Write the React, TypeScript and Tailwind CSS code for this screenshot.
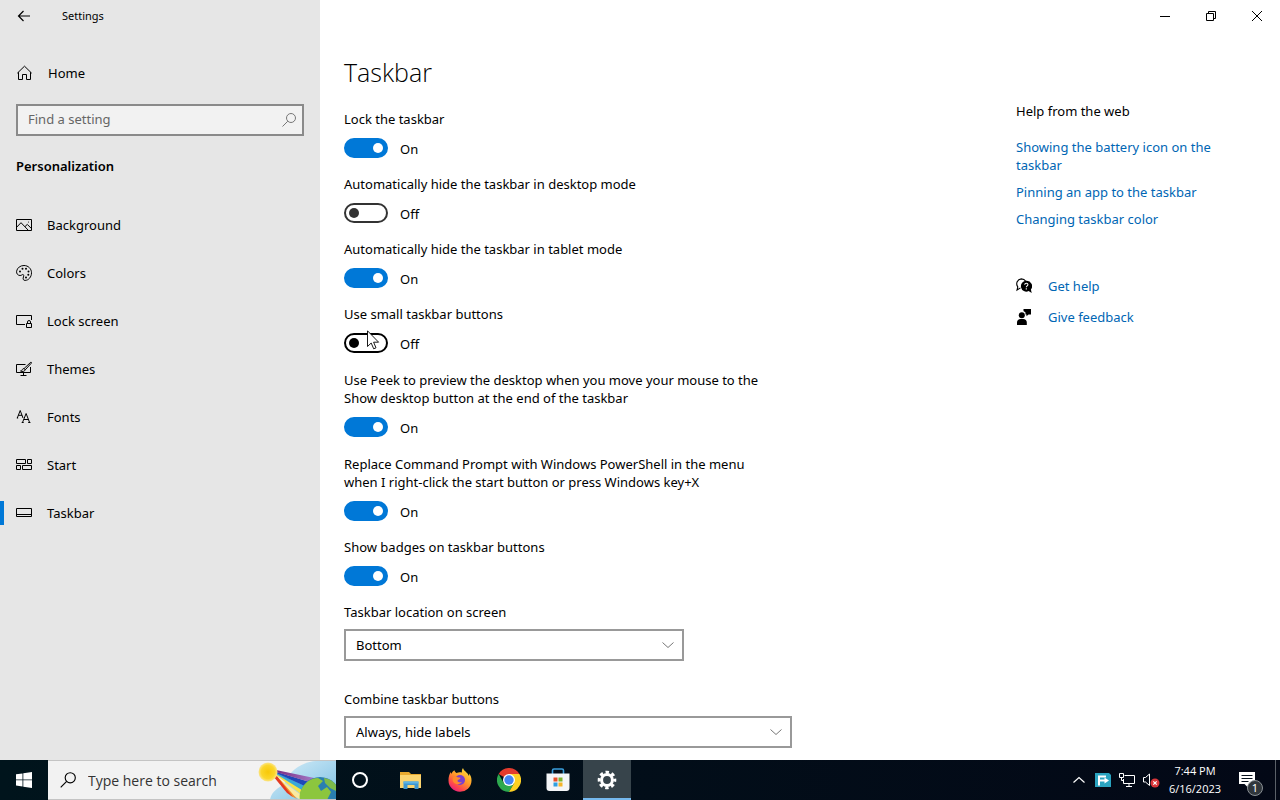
import React, { useState } from 'react';

interface ToggleSetting {
  id: string;
  label: string;
  on: boolean;
  tall?: boolean;
  hovered?: boolean;
}

interface SelectSetting {
  id: string;
  label: string;
  width: string;
  options: string[];
}

const TOGGLES: ToggleSetting[] = [
  { id: 'lock', label: 'Lock the taskbar', on: true },
  { id: 'hide-desktop', label: 'Automatically hide the taskbar in desktop mode', on: false },
  { id: 'hide-tablet', label: 'Automatically hide the taskbar in tablet mode', on: true },
  { id: 'small', label: 'Use small taskbar buttons', on: false, hovered: true },
  { id: 'peek', label: 'Use Peek to preview the desktop when you move your mouse to the Show desktop button at the end of the taskbar', on: true, tall: true },
  { id: 'powershell', label: 'Replace Command Prompt with Windows PowerShell in the menu when I right-click the start button or press Windows key+X', on: true, tall: true },
  { id: 'badges', label: 'Show badges on taskbar buttons', on: true },
];

const SELECTS: SelectSetting[] = [
  { id: 'location', label: 'Taskbar location on screen', width: 'w-[340px]', options: ['Bottom', 'Left', 'Top', 'Right'] },
  { id: 'combine', label: 'Combine taskbar buttons', width: 'w-[448px]', options: ['Always, hide labels', 'When taskbar is full', 'Never'] },
];

const Line = ({ children, className = 'size-4' }: { children: React.ReactNode; className?: string }) => (
  <svg viewBox="0 0 16 16" className={className} fill="none" stroke="currentColor" aria-hidden="true">
    {children}
  </svg>
);

const HomeIcon = () => (
  <Line>
    <path d="M1.3 8.2 8.5 1.2l7.2 7M2.5 7.2v7.3h4V9.5h4v5h4V7.2" />
  </Line>
);

const BackgroundIcon = () => (
  <Line>
    <path d="M.5 2.5h15v11H.5zM.7 10.2l4.3-4.5 7.3 7.6M9 9.6l2.3-2.2 4.2 4.2" />
    <circle cx="12.5" cy="5" r=".5" fill="currentColor" stroke="none" />
  </Line>
);

const ColorsIcon = () => (
  <Line>
    <path d="M.6 6.2C1.2 2.8 4.3.5 8 .5c4.2 0 7.5 3.2 7.5 7.3 0 4.3-3 7.6-6.4 7.6-1.7 0-2.2-1.2-1.9-2.4.3-1.5.9-2.6.2-3.3-.8-.8-1.5.8-3.3.8C2 10.5.2 8.7.6 6.2z" />
    <g fill="currentColor" stroke="none">
      <circle cx="4" cy="6.5" r="1" />
      <circle cx="6.5" cy="3.8" r="1" />
      <circle cx="10" cy="3.8" r="1" />
      <circle cx="12.5" cy="6.5" r="1" />
      <circle cx="12.3" cy="9.8" r="1" />
      <circle cx="10" cy="12.5" r="1" />
    </g>
  </Line>
);

const LockScreenIcon = () => (
  <Line>
    <path d="M9 11.5H.5v-9h15V7M10.5 10.5h5v4h-5zM11.5 10.5V9a1.5 1.5 0 0 1 3 0v1.5" />
  </Line>
);

const ThemesIcon = () => (
  <Line>
    <path d="M9.5 3.5h-9v8h14V6M7.5 11.5v3M4.5 14.5h6" />
    <path d="M14.8 1.2 8.2 7.4l1.2 1.3 5.9-6.5c.5-.7-.1-1.3-.5-1zM8 7.6c-1.5 0-1.7 1-2 1.7-.2.5-.8.7-1.5.7 1.5.9 4.5.6 4.7-1.2z" />
  </Line>
);

const FontsIcon = () => (
  <Line>
    <path d="m1.3 9 2.9-7.5L7 9M2.3 6.3h3.8M.8 9h1.4" />
    <path d="m6.5 13.5 3.6-9 3.5 9M7.8 10.5h4.6M5.7 13.5h2M12.2 13.5h2.2" />
  </Line>
);

const StartIcon = () => (
  <Line>
    <path d="M.5 2.5h9v4h-9zM11.5 2.5h4v4h-4zM.5 8.5h4v4h-4zM6.5 8.5h9v4h-9z" />
  </Line>
);

const TaskbarIcon = () => (
  <Line>
    <path d="M.5 3.5h15v8H.5zM.5 9.5h15" />
  </Line>
);

const SearchIcon = ({ className }: { className: string }) => (
  <Line className={className}>
    <circle cx="10" cy="6" r="4.5" />
    <path d="M6.8 9.2 1.5 14.5" />
  </Line>
);

const NAV = [
  { label: 'Background', icon: BackgroundIcon },
  { label: 'Colors', icon: ColorsIcon },
  { label: 'Lock screen', icon: LockScreenIcon },
  { label: 'Themes', icon: ThemesIcon },
  { label: 'Fonts', icon: FontsIcon },
  { label: 'Start', icon: StartIcon },
  { label: 'Taskbar', icon: TaskbarIcon },
];

const Cursor = () => (
  <svg viewBox="0 0 13 20" className="absolute left-[23px] -top-[3px] h-5 w-[13px] pointer-events-none" aria-hidden="true">
    <path d="M.5.8v15.7l3.7-3.5 2.5 5.8 2.3-1-2.4-5.6h5z" fill="#fff" stroke="#000" strokeWidth=".9" />
  </svg>
);

const ToggleRow = ({ setting }: { setting: ToggleSetting }) => {
  const [on, setOn] = useState(setting.on);
  const offColor = setting.hovered ? 'border-black before:bg-black' : 'border-[#333] before:bg-[#333]';

  return (
    <div className={setting.tall ? 'pt-px' : ''}>
      <label htmlFor={setting.id} className="block max-w-[432px]">{setting.label}</label>
      <div className="relative mt-2.5 flex h-5 items-center gap-3">
        <input
          id={setting.id}
          type="checkbox"
          role="switch"
          checked={on}
          onChange={(e) => setOn(e.target.checked)}
          className={`flex h-5 w-11 shrink-0 appearance-none items-center rounded-full border-2 px-[3px] before:size-2.5 before:rounded-full ${
            on ? 'justify-end border-[#0078d7] bg-[#0078d7] before:bg-white' : `justify-start bg-white ${offColor}`
          }`}
        />
        <span className="pt-0.5">{on ? 'On' : 'Off'}</span>
        {setting.hovered && <Cursor />}
      </div>
    </div>
  );
};

const SelectRow = ({ setting }: { setting: SelectSetting }) => (
  <div>
    <label htmlFor={setting.id} className="block">{setting.label}</label>
    <div className={`relative mt-2 max-w-full ${setting.width}`}>
      <select id={setting.id} className="block h-8 w-full appearance-none border-2 border-[#999] bg-white px-2.5">
        {setting.options.map((o) => <option key={o}>{o}</option>)}
      </select>
      <Line className="pointer-events-none absolute right-2 top-2 size-4 text-[#777]">
        <path d="m2.5 5.5 5.5 5 5.5-5" />
      </Line>
    </div>
  </div>
);

const Sidebar = () => (
  <aside className="w-80 shrink-0 bg-[#e6e6e6]">
    <div className="flex h-8 items-center">
      <button type="button" aria-label="Back" className="flex h-8 w-12 items-center justify-center">
        <Line>
          <path d="M14 8H2.5M7.5 3l-5 5 5 5" strokeWidth="1.2" />
        </Line>
      </button>
      <span className="ml-3.5 text-[11px]">Settings</span>
    </div>
    <a href="#home" className="mt-[17px] flex h-12 items-center gap-4 px-4">
      <HomeIcon />
      Home
    </a>
    <div className="relative mx-4 mt-[7px]">
      <input
        type="text"
        aria-label="Find a setting"
        placeholder="Find a setting"
        className="block h-8 w-full border-2 border-[#8a8a8a] bg-[#f2f2f2] px-2.5 pb-0.5 placeholder:text-[#666]"
      />
      <SearchIcon className="pointer-events-none absolute right-[7px] top-2 size-4 text-[#777]" />
    </div>
    <h2 className="mt-[21px] px-4 font-semibold">Personalization</h2>
    <nav className="mt-[26px]">
      {NAV.map(({ label, icon: Icon }) => (
        <a key={label} href={`#${label}`} className="flex h-12 items-center">
          <span className={`h-6 w-1 ${label === 'Taskbar' ? 'bg-[#0078d7]' : ''}`} />
          <span className="ml-3 mr-[15px]"><Icon /></span>
          {label}
        </a>
      ))}
    </nav>
  </aside>
);

const WindowControls = () => (
  <header className="flex h-8 justify-end">
    <button type="button" aria-label="Minimize" className="flex w-[46px] items-center justify-center">
      <svg viewBox="0 0 10 10" className="size-2.5" stroke="#000"><path d="M0 5.5h10" /></svg>
    </button>
    <button type="button" aria-label="Restore" className="flex w-[46px] items-center justify-center">
      <svg viewBox="0 0 10 10" className="size-2.5" fill="none" stroke="#000"><path d="M.5 2.5h7v7h-7zM2.5 2.5v-2h7v7h-2" /></svg>
    </button>
    <button type="button" aria-label="Close" className="flex w-[46px] items-center justify-center">
      <svg viewBox="0 0 10 10" className="size-2.5" stroke="#000"><path d="m0 0 10 10M10 0 0 10" /></svg>
    </button>
  </header>
);

const HelpPanel = () => (
  <section className="mt-[70px] w-60 shrink-0 text-[#0066b4]">
    <h2 className="text-black">Help from the web</h2>
    <ul className="mt-[18px] space-y-[9px]">
      <li><a href="#battery" className="block">Showing the battery icon on the taskbar</a></li>
      <li><a href="#pinning" className="block">Pinning an app to the taskbar</a></li>
      <li><a href="#color" className="block">Changing taskbar color</a></li>
    </ul>
    <a href="#help" className="mt-[49px] flex items-center gap-4">
      <svg viewBox="0 0 16 16" className="size-4 text-black" aria-hidden="true">
        <path d="M4.5 9.9 1 12l.8-3.2A4.9 4.9 0 0 1 5.3.9c2 0 3.5.8 4.5 2.3" fill="none" stroke="currentColor" strokeWidth="1.1" />
        <path d="M10.3 2.8a5.4 5.4 0 1 0 2.3 10.3l3.1 2-.8-3.5a5.4 5.4 0 0 0-4.6-8.8z" fill="currentColor" />
        <path d="M8.7 6.7c.1-2 3.3-1.9 3.2 0-.1 1.2-1.6 1.2-1.6 2.6M10.3 10.3v1.2" fill="none" stroke="#fff" strokeWidth="1.1" />
      </svg>
      Get help
    </a>
    <a href="#feedback" className="mt-[13px] flex items-center gap-4">
      <svg viewBox="0 0 16 16" className="size-4 text-black" fill="currentColor" aria-hidden="true">
        <circle cx="5.8" cy="6.3" r="3" />
        <path d="M1 16v-2.5C1 11.3 2.6 10 4.5 10h2.8c2 0 3.5 1.3 3.5 3.5V16zM7.5 0H15v5.5h-2.5L10.5 7.3V5.5h-1V3.5L7.5 2z" />
      </svg>
      Give feedback
    </a>
  </section>
);

const SearchArt = () => (
  <svg viewBox="0 0 80 40" className="h-10 w-20 shrink-0" aria-hidden="true">
    <defs>
      <radialGradient id="sun">
        <stop offset="0" stopColor="#f8c808" />
        <stop offset=".7" stopColor="#fbd62a" />
        <stop offset="1" stopColor="#fbe58a" />
      </radialGradient>
      <linearGradient id="sky" x1="0" x2="1" y1="0" y2="1">
        <stop offset="0" stopColor="#d8eef8" />
        <stop offset="1" stopColor="#7cc0e4" />
      </linearGradient>
      <linearGradient id="beam" x1="0" x2="1">
        <stop offset="0" stopColor="#7a2a80" />
        <stop offset="1" stopColor="#a884d0" />
      </linearGradient>
    </defs>
    <path d="M14 40C15 32 22 28 28 24 34 10 46 2 60 1h20v39z" fill="url(#sky)" />
    <path d="m19 16 13 16 11 7 5-2z" fill="#fbeaa0" />
    <path d="m18 16 17 20 6 3L21 16z" fill="#f2932a" />
    <path d="m17 16 14 17 6 4-17-22z" fill="#e33a22" />
    <path d="m20 15 26 20 3-4-28-17z" fill="#f7e24a" />
    <path d="m20 14 29 18 4-4-32-15z" fill="#3aa9d8" />
    <path d="m20 13 33 15 4-5-36-11z" fill="#2048b8" />
    <path d="m20 12 37 11 6-4-43-9z" fill="url(#beam)" />
    <circle cx="64" cy="37" r="20" fill="#2a7fb0" />
    <path d="M45 30c4-8 10-12 17-12l5 3-5 5 3 5 6-4 4 5-4 8H44c-1-4 0-7 1-10z" fill="#8cc63e" />
    <path d="M68 18c6 1 10 4 12 7v6l-6-3-5-5z" fill="#7dbb4a" />
    <circle cx="12" cy="12" r="9.5" fill="url(#sun)" />
  </svg>
);

const FolderIcon = () => (
  <svg viewBox="0 0 24 24" className="size-6" aria-hidden="true">
    <path d="M1 4h9l2 2h10v14H1z" fill="#e8a92e" />
    <path d="M1 7h21v13H1z" fill="#fbd46f" />
    <path d="M4.5 21v-7.5h15V21h-4v-4h-7v4z" fill="#3e97d1" />
    <path d="M4.5 13.5h15v2h-15z" fill="#5db4e6" />
  </svg>
);

const FirefoxIcon = () => (
  <svg viewBox="0 0 24 24" className="size-6" aria-hidden="true">
    <defs>
      <linearGradient id="fox" x1=".85" x2=".2" y1="0" y2="1">
        <stop offset="0" stopColor="#ffe63d" />
        <stop offset=".45" stopColor="#ff9a2a" />
        <stop offset=".75" stopColor="#ff4a4a" />
        <stop offset="1" stopColor="#e31587" />
      </linearGradient>
    </defs>
    <path d="M15 0c-1.5 2-1.2 4-1 4.5-2-.6-4-.3-5.5.4C7 4.5 6.5 2.7 6.5 2.3 5 3 4 4.5 3.6 5.8 2.9 5.3 2.8 4 2.8 4 1.3 6 .5 9 .5 12.3a11.5 11.3 0 0 0 23 .5c.2-3-1-6-2.5-7.3.2 1 .2 1.8 0 2.5C19.5 4 16 3.5 15 0z" fill="url(#fox)" />
    <circle cx="12" cy="12" r="5" fill="#7a3fd0" />
    <path d="M5 9.5c1.5-1.2 3-1 4-.4 1 .5 3 .4 3.5.9-.3 1.5-3 1.5-3 2.8 0 1.5 2.5 2 4.5 1-1.5 3-7 3.5-8.8 0C4.5 12 4.5 10.5 5 9.5z" fill="#ff8a2c" />
  </svg>
);

const ChromeIcon = () => (
  <svg viewBox="0 0 24 24" className="size-6" aria-hidden="true">
    <path d="M12 12 1.6 6a12 12 0 0 1 20.8 0z" fill="#e33b2e" />
    <path d="M1.6 6A12 12 0 0 0 12 24l5.2-9L12 12 6.8 15z" fill="#2da94f" />
    <path d="M22.4 6H12v6l5.2 3L12 24A12 12 0 0 0 22.4 6z" fill="#fdd023" />
    <circle cx="12" cy="12" r="6" fill="#fff" />
    <circle cx="12" cy="12" r="4.7" fill="#4285f4" />
  </svg>
);

const StoreIcon = () => (
  <svg viewBox="0 0 24 24" className="size-6" aria-hidden="true">
    <path d="M6.5 6V2.5c0-1 .5-1.5 1.5-1.5h8c1 0 1.5.5 1.5 1.5V6" fill="none" stroke="#3aa0de" strokeWidth="1.6" />
    <path d="M.5 5.5h23V20c0 2-1 3-3 3h-17c-2 0-3-1-3-3z" fill="#f4f6f8" />
    <path d="M7.5 9.5h4v4h-4z" fill="#e8502a" />
    <path d="M12.5 9.5h4v4h-4z" fill="#7fb52c" />
    <path d="M7.5 14.5h4v4h-4z" fill="#2f9fe0" />
    <path d="M12.5 14.5h4v4h-4z" fill="#f5b52a" />
  </svg>
);

const GearIcon = () => (
  <svg viewBox="0 0 20 20" className="size-5" fill="none" stroke="#fff" aria-hidden="true">
    <circle cx="10" cy="10" r="5.4" strokeWidth="3" />
    <circle cx="10" cy="10" r="7.8" strokeWidth="3" strokeDasharray="3.4 2.726" strokeDashoffset="1.7" />
  </svg>
);

const PINNED = [
  { label: 'File Explorer', icon: FolderIcon },
  { label: 'Firefox', icon: FirefoxIcon },
  { label: 'Chrome', icon: ChromeIcon },
  { label: 'Microsoft Store', icon: StoreIcon },
];

const DesktopTaskbar = () => (
  <footer className="flex h-10 bg-linear-to-r from-[#00141c] to-[#030816] text-white">
    <button type="button" aria-label="Start" className="flex w-12 shrink-0 items-center justify-center">
      <svg viewBox="0 0 16 16" className="size-4" fill="#fff"><path d="M0 2.3 6.5 1.4v6.1H0zM7.3 1.3 16 0v7.5H7.3zM0 8.3h6.5v6.2L0 13.6zM7.3 8.3H16V16l-8.7-1.3z" /></svg>
    </button>
    <div className="flex w-72 shrink-0 items-center overflow-hidden border-y border-[#c4c4c4] bg-[#f2f2f2] text-black">
      <SearchIcon className="ml-[11px] size-[18px] shrink-0" />
      <input
        type="text"
        aria-label="Type here to search"
        placeholder="Type here to search"
        className="ml-[11px] h-full min-w-0 flex-1 font-['Open_Sans','Noto_Sans',sans-serif] text-[14px] placeholder:text-[#333]"
      />
      <SearchArt />
    </div>
    <div className="flex gap-px">
      <button type="button" aria-label="Cortana" className="flex w-[50px] items-center pl-4">
        <span className="size-4 rounded-full border-2 border-white" />
      </button>
      {PINNED.map(({ label, icon: Icon }) => (
        <button key={label} type="button" aria-label={label} className="flex w-12 items-center justify-center"><Icon /></button>
      ))}
      <button type="button" aria-label="Settings" className="flex w-12 items-center justify-center border-b-2 border-[#76b9ed] bg-[#37444b] pt-0.5">
        <GearIcon />
      </button>
    </div>
    <div className="ml-auto flex items-center">
      <button type="button" aria-label="Show hidden icons" className="flex w-6 justify-center">
        <Line><path d="m2.5 10.5 5.5-5 5.5 5" strokeWidth="1.2" /></Line>
      </button>
      <button type="button" aria-label="Remote agent" className="flex w-6 justify-center">
        <svg viewBox="0 0 16 16" className="size-4">
          <path d="M0 1h14l2 2v12H0z" fill="#2aa3c0" />
          <path d="M4 13.5v-9h7M4 8.5h6" fill="none" stroke="#fff" strokeWidth="2" />
          <path d="m9.5 5.5 4.5 3-4.5 3z" fill="#fff" />
        </svg>
      </button>
      <button type="button" aria-label="Network" className="flex w-6 justify-center">
        <Line><path d="M5.5 3.5h10v8h-11V7M7 14.5h6M10 11.5v3M.5 1.5h4v4h-4zM2.5 5.5v3h2" /></Line>
      </button>
      <button type="button" aria-label="Volume muted" className="flex w-6 justify-center">
        <svg viewBox="0 0 18 16" className="h-4 w-[18px]" fill="none">
          <path d="M1.5 5.5h2l4-3.5v11.5l-4-3.5h-2z" stroke="#fff" />
          <circle cx="13" cy="11" r="4.5" fill="#d9363a" />
          <path d="m11.3 9.3 3.4 3.4M14.7 9.3l-3.4 3.4" stroke="#fff" strokeWidth="1.2" />
        </svg>
      </button>
      <div className="w-16 text-center font-['Open_Sans','Noto_Sans',sans-serif] text-[11px] leading-[18px]">
        <div>7:44 PM</div>
        <div>6/16/2023</div>
      </div>
      <button type="button" aria-label="Notifications" className="relative flex h-10 w-12 items-center pl-3">
        <svg viewBox="0 0 16 16" className="size-4"><path d="M0 0h16v12H9.5v4l-4-4H0z" fill="#fff" /><path d="M2.5 3.5h11M2.5 6.5h11M2.5 9.5h7" stroke="#05101c" /></svg>
        <span className="absolute bottom-1 right-3 flex size-4 items-center justify-center rounded-full border border-[#8a9095] bg-[#30363c] text-[11px]">1</span>
      </button>
      <span className="mr-1 h-10 w-px bg-[#5a6068]" />
    </div>
  </footer>
);

const App: React.FC = () => (
  <div className="flex min-h-screen flex-col bg-white font-['Noto_Sans','Open_Sans',sans-serif] text-[13px] leading-[18px] text-black">
    <div className="flex flex-1">
      <Sidebar />
      <div className="min-w-0 flex-1">
        <WindowControls />
        <div className="flex justify-between gap-6 px-6">
          <main className="min-w-0 pb-3">
            <h1 className="mt-5 font-['Open_Sans','Noto_Sans',sans-serif] text-[25px] font-light leading-10">Taskbar</h1>
            <div className="mt-[18px] space-y-[17px]">
              {TOGGLES.map((t) => <ToggleRow key={t.id} setting={t} />)}
            </div>
            <div className="mt-[17px] space-y-[29px]">
              {SELECTS.map((s) => <SelectRow key={s.id} setting={s} />)}
            </div>
          </main>
          <HelpPanel />
        </div>
      </div>
    </div>
    <DesktopTaskbar />
  </div>
);

export default App;
